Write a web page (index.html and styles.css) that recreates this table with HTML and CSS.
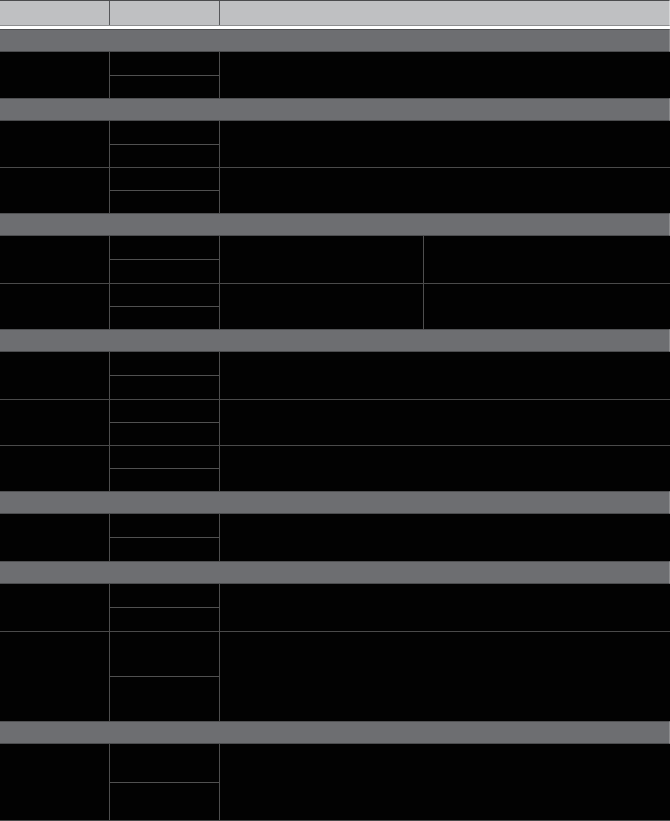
FILE: index.html
```html
<!DOCTYPE html>
<html>
<head>
<meta charset="utf-8">
<link rel="stylesheet" href="styles.css">
</head>
<body>
<div class="sheet">
  <div class="head"><div class="hc"></div><div class="hc"></div><div class="hc"></div></div>
  <div class="gap"></div>

  <div class="band"></div>
  <div class="group h46"><div class="c1"></div><div class="c2"><div class="sub"></div><div class="sub"></div></div><div class="c3"></div></div>

  <div class="band"></div>
  <div class="group h46"><div class="c1"></div><div class="c2"><div class="sub"></div><div class="sub"></div></div><div class="c3"></div></div>
  <div class="group h46 sep"><div class="c1"></div><div class="c2"><div class="sub"></div><div class="sub"></div></div><div class="c3"></div></div>

  <div class="band"></div>
  <div class="group split h47"><div class="c1"></div><div class="c2"><div class="sub"></div><div class="sub"></div></div><div class="c3a"></div><div class="c3"></div></div>
  <div class="group split h46 sep"><div class="c1"></div><div class="c2"><div class="sub"></div><div class="sub"></div></div><div class="c3a"></div><div class="c3"></div></div>

  <div class="band"></div>
  <div class="group h47"><div class="c1"></div><div class="c2"><div class="sub"></div><div class="sub"></div></div><div class="c3"></div></div>
  <div class="group h46 sep"><div class="c1"></div><div class="c2"><div class="sub"></div><div class="sub"></div></div><div class="c3"></div></div>
  <div class="group h46 sep"><div class="c1"></div><div class="c2"><div class="sub"></div><div class="sub"></div></div><div class="c3"></div></div>

  <div class="band"></div>
  <div class="group h47"><div class="c1"></div><div class="c2"><div class="sub"></div><div class="sub"></div></div><div class="c3"></div></div>

  <div class="band"></div>
  <div class="group h47"><div class="c1"></div><div class="c2"><div class="sub"></div><div class="sub"></div></div><div class="c3"></div></div>
  <div class="group h90 sep"><div class="c1"></div><div class="c2"><div class="sub"></div><div class="sub"></div></div><div class="c3"></div></div>

  <div class="band"></div>
  <div class="group h77 last"><div class="c1"></div><div class="c2"><div class="sub"></div><div class="sub"></div></div><div class="c3"></div></div>
</div>
</body>
</html>
```

FILE: styles.css
```css
html, body {
  margin: 0;
  padding: 0;
  background: #000;
}

.sheet {
  width: 670px;
  background: #020202;
  display: flex;
  flex-direction: column;
}

.head {
  box-sizing: border-box;
  height: 26px;
  display: grid;
  grid-template-columns: 110px 110px 1fr;
  background: #bfc0c2;
  border-top: 1px solid #4a4b4d;
  border-bottom: 1px solid #8d8e90;
  border-right: 1px solid #d6d7d8;
}

.hc {
  border-right: 1px solid #56575a;
}

.hc:last-child {
  border-right: none;
}

.gap {
  height: 3px;
  background: #ffffff;
}

.band {
  box-sizing: border-box;
  height: 23px;
  background: #6d6e71;
  border-top: 1px solid #505153;
  border-bottom: 1px solid #4c4d4f;
  border-right: 1px solid #8a8b8d;
}

.group {
  box-sizing: border-box;
  display: grid;
  grid-template-columns: 110px 110px 1fr;
  background: #020202;
}

.group.split {
  grid-template-columns: 110px 110px 204px 1fr;
}

.group.sep {
  border-top: 1px solid #4a4a4a;
}

.group.last {
  border-bottom: 1px solid #4a4a4a;
}

.h46 { height: 46px; }
.h47 { height: 47px; }
.h77 { height: 77px; }
.h90 { height: 90px; }

.c1 {
  border-right: 1px solid #4e4e4e;
}

.c2 {
  border-right: 1px solid #4e4e4e;
  display: flex;
  flex-direction: column;
}

.sub {
  flex: 1;
}

.sub + .sub {
  border-top: 1px solid #505050;
}

.c3a {
  border-right: 1px solid #4e4e4e;
}

.c3 {
  min-width: 0;
}
```
